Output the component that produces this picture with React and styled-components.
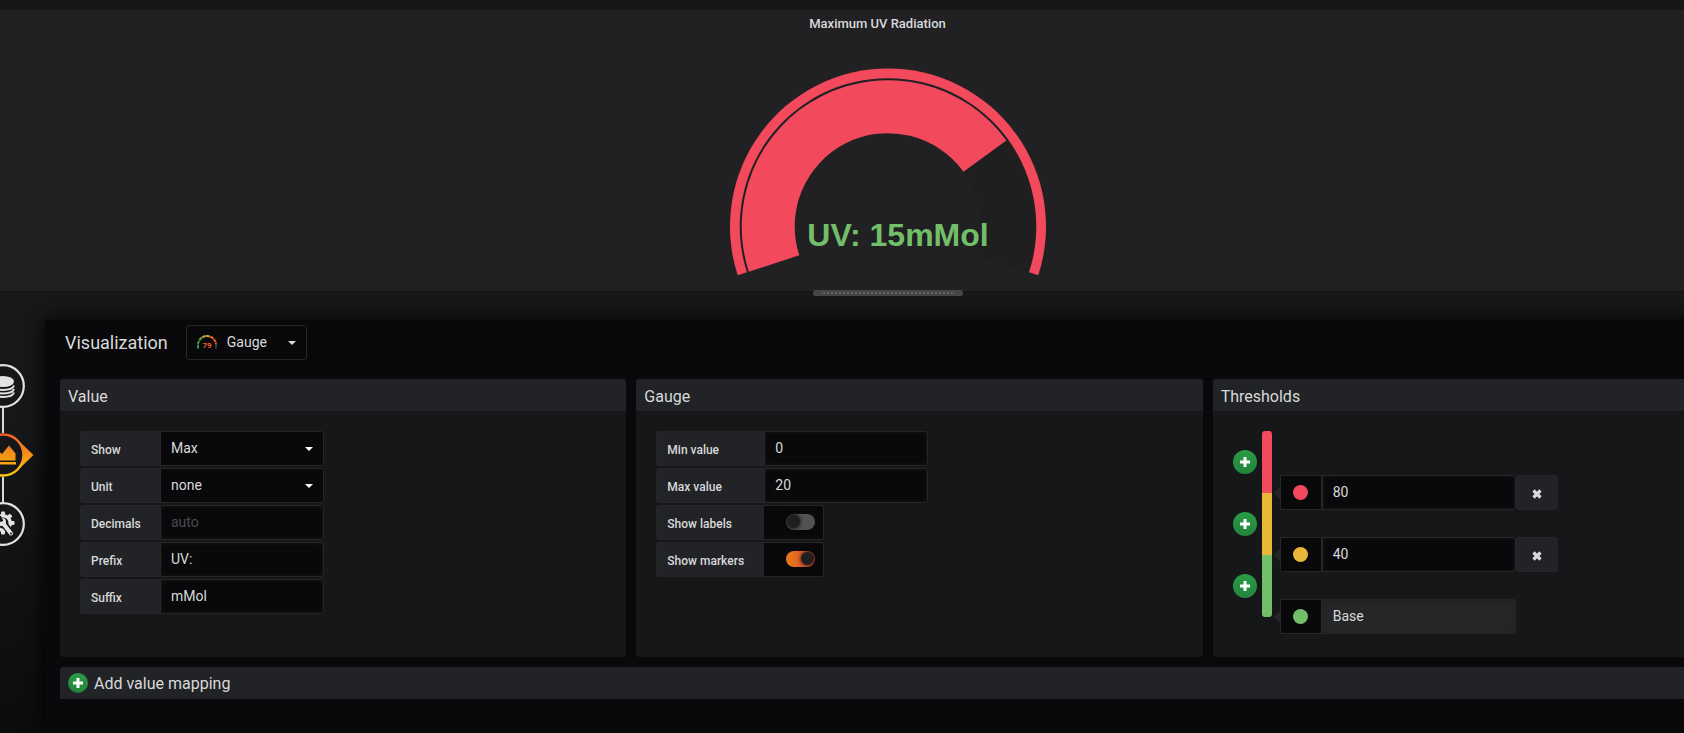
import React from "react";
import styled, { createGlobalStyle, css } from "styled-components";

const GlobalStyle = createGlobalStyle`
  * { box-sizing: border-box; }
  body {
    margin: 0;
    background: #161719;
    color: #d8d9da;
    font-family: Roboto, "Liberation Sans", sans-serif;
    font-size: 14px;
  }
  h1, h2, h3 { margin: 0; font-weight: 400; }
  button, input, select { font: inherit; color: inherit; }
`;

const edge = "1px solid #262628";
const raised = "#212124";
const deep = "#09090b";

const Viewport = styled.div`
  overflow: hidden;
`;

const Page = styled.div`
  display: flex;
  flex-direction: column;
  min-height: 100vh;
  margin: 0 -111px 0 -20px;
  padding-top: 9px;
`;

const Preview = styled.section`
  display: flex;
  flex-direction: column;
  align-items: center;
  height: 283px;
  flex: none;
  background: ${raised};
  border-top: 1px solid #141414;
  border-bottom: 1px solid #141414;
`;

const PreviewTitle = styled.h1`
  padding: 6px 20px 0 0;
  font-size: 13px;
  font-weight: 500;
  line-height: 16px;
`;

const Dial = styled.svg`
  display: block;
  width: 340px;
  height: 240px;
  margin-top: 8px;
  flex: none;
`;

const Handle = styled.div`
  width: 150px;
  height: 6px;
  margin-top: 10px;
  padding: 2px 10px;
  flex: none;
  border-radius: 3px;
  background: #464648;
  z-index: 1;
`;

const HandleDots = styled.div`
  height: 2px;
  background: repeating-linear-gradient(90deg, #606062 0 2px, transparent 2px 4px);
`;

const Editor = styled.div`
  display: flex;
  flex: 1;
  padding-top: 28px;
  background: linear-gradient(180deg, #17181a 0%, #161719 30%, #0b0c0d 100%);
`;

const Steps = styled.nav`
  display: flex;
  flex-direction: column;
  width: 65px;
  flex: none;
  padding: 44px 0 0 1px;
`;

const Step = styled.button`
  position: relative;
  width: 44px;
  height: 44px;
  padding: 0;
  border: 0;
  background: none;

  & + & { margin-top: 25px; }
  & + &::before {
    content: "";
    position: absolute;
    left: 21px;
    bottom: 44px;
    width: 2px;
    height: 25px;
    background: #d8d9da;
  }
  svg { display: block; overflow: visible; }
`;

const Body = styled.main`
  flex: 1;
  padding: 5px 16px 24px 15px;
  border-radius: 3px 0 0 0;
  background: ${deep};
  box-shadow: 0 0 20px #000;
`;

const Toolbar = styled.header`
  display: flex;
  align-items: center;
  gap: 18px;
  padding-left: 5px;
  margin-bottom: 19px;
`;

const ToolbarTitle = styled.h2`
  font-size: 18px;
  line-height: 24px;
`;

const SelectWrap = styled.div`
  position: relative;
  display: flex;
  width: ${(p) => p.$width}px;
  height: 35px;
`;

const Select = styled.select`
  width: 100%;
  padding: 0 10px 2px ${(p) => p.$inset || 10}px;
  appearance: none;
  border: ${edge};
  border-radius: ${(p) => (p.$inset ? 3 : 0)}px 3px 3px ${(p) => (p.$inset ? 3 : 0)}px;
  background: ${deep};
`;

const Caret = styled.i`
  position: absolute;
  top: 16px;
  right: 11px;
  border: 4px solid transparent;
  border-top-color: ${(p) => (p.$muted ? "#d8d9da" : "#fff")};
  border-bottom: 0;
  pointer-events: none;
`;

const GaugeIcon = styled.svg`
  position: absolute;
  left: 10px;
  top: 8px;
  pointer-events: none;
`;

const Panels = styled.div`
  display: grid;
  grid-template-columns: repeat(3, 1fr);
  gap: 10px;
  margin-bottom: 10px;
`;

const Panel = styled.section`
  border-radius: 3px;
  overflow: hidden;
  background: #161719;
`;

const PanelHead = styled.h3`
  height: 32px;
  padding: 2px 8px 0;
  background: #222326;
  font-size: 16px;
  line-height: 32px;
`;

const PanelBody = styled.div`
  padding: 20px;
`;

const Field = styled.div`
  display: flex;
  height: 35px;
  margin-bottom: 2px;
`;

const FieldLabel = styled.label`
  width: ${(p) => p.$width}px;
  padding: 0 10px;
  border: ${edge};
  border-right: 0;
  border-radius: 3px 0 0 3px;
  background: #222326;
  font-size: 12px;
  font-weight: 500;
  line-height: 36px;
`;

const TextInput = styled.input`
  width: ${(p) => p.$width || 164}px;
  height: 35px;
  padding: 0 10px 2px;
  border: ${edge};
  border-radius: 0 3px 3px 0;
  outline: 0;
  background: ${(p) => (p.readOnly ? "#262628" : deep)};
  box-shadow: ${(p) => (p.readOnly ? "inset 0 0 5px #212124" : "inset 0 0 5px #161719")};

  &::placeholder { color: #4a4b4d; opacity: 1; }
`;

const SwitchCell = styled.div`
  display: flex;
  align-items: center;
  justify-content: flex-end;
  width: 60px;
  padding: 0 8px 2px 0;
  border: ${edge};
  border-left: 0;
  border-radius: 0 3px 3px 0;
  background: ${deep};
`;

const Switch = styled.input`
  appearance: none;
  display: flex;
  align-items: center;
  width: 29px;
  height: 16px;
  margin: 0;
  padding: 0 1px;
  border-radius: 8px;
  background: #525252;

  &::before {
    content: "";
    width: 13px;
    height: 13px;
    border-radius: 50%;
    background: #1f1f20;
    box-shadow: 0 0 4px #000;
  }
  ${(p) =>
    p.defaultChecked &&
    css`
      justify-content: flex-end;
      background: linear-gradient(90deg, #eb7b18, #d44a3a);
    `}
`;

const Thresholds = styled.div`
  display: flex;
`;

const AddColumn = styled.div`
  display: flex;
  flex-direction: column;
  gap: 38px;
  padding-top: 19px;
`;

const AddButton = styled.button`
  display: flex;
  align-items: center;
  justify-content: center;
  width: ${(p) => p.$size}px;
  height: ${(p) => p.$size}px;
  padding: 0;
  border: 0;
  border-radius: 50%;
  background: linear-gradient(180deg, #299c46, #23843b);
`;

const Scale = styled.div`
  width: 10px;
  height: 186px;
  margin: 0 8px 0 5px;
  border-radius: 3px;
  overflow: hidden;
`;

const Segment = styled.div`
  height: 62px;
  background: ${(p) => p.$color};
`;

const ThresholdRows = styled.div`
  display: flex;
  flex-direction: column;
  gap: 27px;
  padding: 44px 0 3px;
`;

const ThresholdRow = styled.div`
  position: relative;
  display: flex;
  height: 35px;

  &::before {
    content: "";
    position: absolute;
    left: -6px;
    top: 12px;
    border: 6px solid transparent;
    border-right-color: #262628;
    border-left: 0;
  }
`;

const Swatch = styled.button`
  width: 42px;
  display: flex;
  align-items: center;
  justify-content: center;
  padding: 0 1px 0 0;
  border: ${edge};
  background: ${deep};

  &::before {
    content: "";
    width: 15px;
    height: 15px;
    border-radius: 50%;
    background: ${(p) => p.$color};
  }
`;

const RemoveButton = styled.button`
  display: flex;
  align-items: center;
  justify-content: center;
  width: 42px;
  height: 35px;
  padding: 2px 0 0;
  border: ${edge};
  border-radius: 3px;
  background: #222326;
`;

const MappingBar = styled.div`
  display: flex;
  align-items: center;
  gap: 6px;
  height: 32px;
  padding: 0 8px;
  border-radius: 3px 3px 0 0;
  background: #222326;
  font-size: 16px;
  line-height: 32px;

  label { padding-top: 2px; }
`;

const polar = (r, deg) => {
  const a = (deg * Math.PI) / 180;
  return `${170 + r * Math.cos(a)} ${186.5 - r * Math.sin(a)}`;
};

const ring = (outer, inner, from, to) => {
  const large = from - to > 180 ? 1 : 0;
  return `M${polar(outer, from)} A${outer} ${outer} 0 ${large} 1 ${polar(outer, to)} L${polar(inner, to)} A${inner} ${inner} 0 ${large} 0 ${polar(inner, from)} Z`;
};

const Plus = () => (
  <svg width="12" height="12" viewBox="0 0 12 12" aria-hidden="true">
    <path d="M6 1v10M1 6h10" stroke="#fff" strokeWidth="3" />
  </svg>
);

const Cross = () => (
  <svg width="10" height="10" viewBox="0 0 10 10" aria-hidden="true">
    <path d="M1.5 1.5l7 7M8.5 1.5l-7 7" stroke="#d8d9da" strokeWidth="3.2" />
  </svg>
);

const StepRing = ({ children }) => (
  <svg width="44" height="44" viewBox="0 0 44 44" aria-hidden="true">
    <circle cx="22" cy="22" r="20.8" fill="#161719" stroke="#e3e3e3" strokeWidth="2.2" />
    {children}
  </svg>
);

const teeth = [0, 45, 90, 135, 180, 225, 270, 315];

const thresholds = [
  { name: "Red", color: "#f2495c", value: "80" },
  { name: "Yellow", color: "#eab839", value: "40" },
  { name: "Green", color: "#73bf69", value: "Base", base: true },
];

const SelectField = ({ id, label, value }) => (
  <Field>
    <FieldLabel htmlFor={id} $width={80}>{label}</FieldLabel>
    <SelectWrap $width={164}>
      <Select id={id}><option>{value}</option></Select>
      <Caret />
    </SelectWrap>
  </Field>
);

const TextField = ({ id, label, width, ...rest }) => (
  <Field>
    <FieldLabel htmlFor={id} $width={width}>{label}</FieldLabel>
    <TextInput id={id} {...rest} />
  </Field>
);

const SwitchField = ({ id, label, on }) => (
  <Field>
    <FieldLabel htmlFor={id} $width={108}>{label}</FieldLabel>
    <SwitchCell><Switch id={id} type="checkbox" defaultChecked={on} /></SwitchCell>
  </Field>
);

export default function App() {
  return (
    <Viewport>
      <GlobalStyle />
      <Page>
        <Preview>
          <PreviewTitle>Maximum UV Radiation</PreviewTitle>
          <Dial viewBox="0 0 340 240" role="img" aria-label="UV gauge">
            <path d={ring(146.3, 93.3, 36, -18)} fill="#1f1f1f" />
            <path d={ring(146.3, 93.3, 198, 36)} fill="#f2495c" />
            <path d={ring(158, 148.3, 198, -18)} fill="#f2495c" />
            <text x="180" y="206" textAnchor="middle" fill="#73bf69" fontFamily="Liberation Sans, sans-serif" fontSize="32" fontWeight="700">
              UV: 15mMol
            </text>
          </Dial>
          <Handle><HandleDots /></Handle>
        </Preview>

        <Editor>
          <Steps>
            <Step aria-label="Queries">
              <StepRing>
                <ellipse cx="22" cy="17.5" rx="11" ry="5.5" fill="#e3e3e3" />
                <path d="M11 21.5c2 6 20 6 22 0M11 25c2 6 20 6 22 0M11 28.5c2 6 20 6 22 0" fill="none" stroke="#e3e3e3" strokeWidth="2" />
              </StepRing>
            </Step>
            <Step aria-label="Visualization">
              <svg width="44" height="44" viewBox="0 0 44 44" aria-hidden="true">
                <defs>
                  <linearGradient id="flame" gradientUnits="userSpaceOnUse" x1="0" y1="0" x2="0" y2="44">
                    <stop offset="0" stopColor="#f05a28" />
                    <stop offset="1" stopColor="#fbca0a" />
                  </linearGradient>
                </defs>
                <path d="M29 1.5C33 3 36 6 39 9L52.5 22L39 35C36 38 33 41 29 42.5Z" fill="url(#flame)" />
                <circle cx="22" cy="22" r="20.5" fill="#161719" stroke="url(#flame)" strokeWidth="2.4" />
                <path d="M9 27V21l6-5 6 5 7-8.500 6.500 8V27.500H9z M9 29h26v2.500H9z" fill="url(#flame)" />
              </svg>
            </Step>
            <Step aria-label="General">
              <StepRing>
                <g fill="#e3e3e3">
                  <circle cx="22" cy="21" r="9" />
                  {teeth.map((a) => (
                    <rect key={a} x="20" y="9.5" width="4" height="5" rx="1" transform={`rotate(${a} 22 21)`} />
                  ))}
                </g>
                <circle cx="22" cy="21" r="5.5" fill="#161719" />
                <path d="M21 20l10 12" stroke="#161719" strokeWidth="7" strokeLinecap="round" />
                <path d="M21 20l9 11.5" stroke="#e3e3e3" strokeWidth="4" strokeLinecap="round" />
                <circle cx="21" cy="20" r="4" fill="#e3e3e3" />
                <path d="M21 19.5l-2.500-5" stroke="#161719" strokeWidth="3" />
                <circle cx="30" cy="31.5" r="1" fill="#161719" />
              </StepRing>
            </Step>
          </Steps>

          <Body>
            <Toolbar>
              <ToolbarTitle>Visualization</ToolbarTitle>
              <SelectWrap $width={121}>
                <Select $inset={40} aria-label="Visualization type"><option>Gauge</option></Select>
                <GaugeIcon width="22" height="18" viewBox="0 0 22 18" aria-hidden="true">
                  <defs>
                    <linearGradient id="arc" x1="0" x2="1">
                      <stop offset="0" stopColor="#299c46" />
                      <stop offset="0.45" stopColor="#eab839" />
                      <stop offset="0.9" stopColor="#f05a28" />
                    </linearGradient>
                  </defs>
                  <path d="M2 15.5V12a9 9 0 0 1 18 0" fill="none" stroke="url(#arc)" strokeWidth="2" strokeDasharray="3.600 0.600" />
                  <path d="M20 11v4.500" stroke="#464648" strokeWidth="2" strokeDasharray="2 0.600" />
                  <text x="11" y="15" textAnchor="middle" fill="#f05a28" fontSize="8" fontWeight="700">79</text>
                </GaugeIcon>
                <Caret $muted />
              </SelectWrap>
            </Toolbar>

            <Panels>
              <Panel>
                <PanelHead>Value</PanelHead>
                <PanelBody>
                  <SelectField id="show" label="Show" value="Max" />
                  <SelectField id="unit" label="Unit" value="none" />
                  <TextField id="decimals" label="Decimals" width={80} placeholder="auto" />
                  <TextField id="prefix" label="Prefix" width={80} defaultValue="UV:" />
                  <TextField id="suffix" label="Suffix" width={80} defaultValue="mMol" />
                </PanelBody>
              </Panel>

              <Panel>
                <PanelHead>Gauge</PanelHead>
                <PanelBody>
                  <TextField id="min" label="Min value" width={108} defaultValue="0" />
                  <TextField id="max" label="Max value" width={108} defaultValue="20" />
                  <SwitchField id="labels" label="Show labels" />
                  <SwitchField id="markers" label="Show markers" on />
                </PanelBody>
              </Panel>

              <Panel>
                <PanelHead>Thresholds</PanelHead>
                <PanelBody>
                  <Thresholds>
                    <AddColumn>
                      {thresholds.map((t) => (
                        <AddButton key={t.name} $size={24} aria-label="Add threshold"><Plus /></AddButton>
                      ))}
                    </AddColumn>
                    <Scale>
                      {thresholds.map((t) => <Segment key={t.name} $color={t.color} />)}
                    </Scale>
                    <ThresholdRows>
                      {thresholds.map((t) => (
                        <ThresholdRow key={t.name}>
                          <Swatch $color={t.color} aria-label={`${t.name} color`} />
                          <TextInput $width={194} defaultValue={t.value} readOnly={t.base} aria-label={`${t.name} threshold`} />
                          {!t.base && <RemoveButton aria-label="Remove threshold"><Cross /></RemoveButton>}
                        </ThresholdRow>
                      ))}
                    </ThresholdRows>
                  </Thresholds>
                </PanelBody>
              </Panel>
            </Panels>

            <MappingBar>
              <AddButton id="add-mapping" $size={20}><Plus /></AddButton>
              <label htmlFor="add-mapping">Add value mapping</label>
            </MappingBar>
          </Body>
        </Editor>
      </Page>
    </Viewport>
  );
}
